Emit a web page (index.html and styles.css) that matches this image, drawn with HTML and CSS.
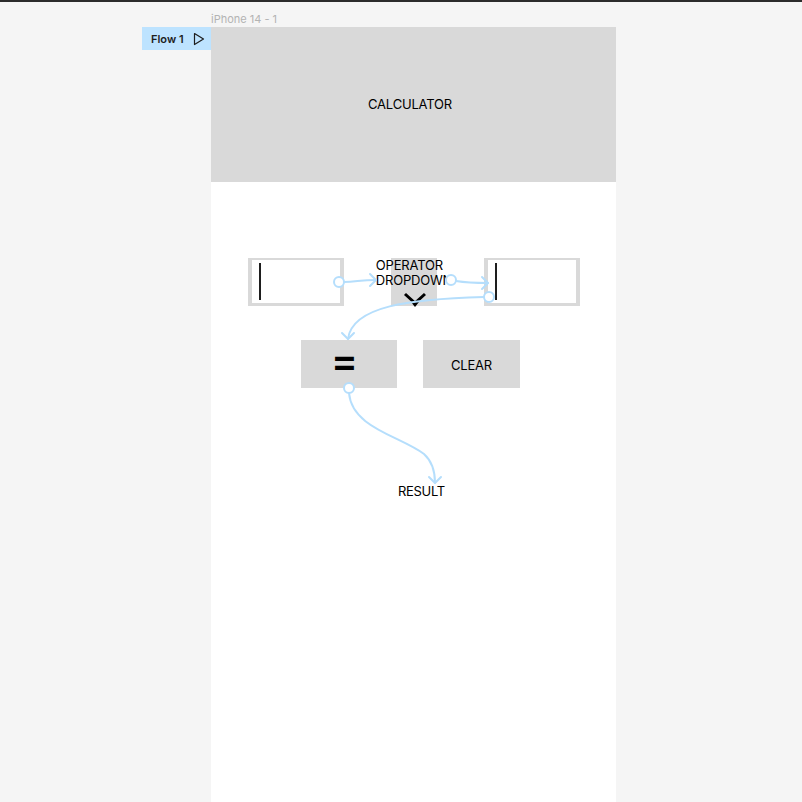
FILE: index.html
```html
<!DOCTYPE html>
<html lang="en">
<head>
  <meta charset="UTF-8" />
  <title>iPhone 14 - 1</title>
  <meta name="viewport" content="width=device-width, initial-scale=1.0"/>
  <link rel="stylesheet" href="styles.css">
</head>
<body>
  <div class="topbar"></div>

  <div class="canvas">
    <div class="frame-label">iPhone 14 - 1</div>

    <div class="flow-badge">
      <span>Flow 1</span>
      <svg class="play" width="12" height="14" viewBox="0 0 12 14">
        <path d="M1.5 1.5 L10.5 7 L1.5 12.5 Z" fill="none" stroke="#1e1e1e" stroke-width="1.2" stroke-linejoin="round"/>
      </svg>
    </div>

    <div class="frame">
      <div class="header">CALCULATOR</div>

      <div class="inputs-row">
        <div class="num-input"><span class="caret"></span></div>
        <div class="operator">
          <span class="operator-text">OPERATOR<br>DROPDOWN</span>
        </div>
        <div class="num-input"><span class="caret"></span></div>
      </div>

      <div class="buttons-row">
        <div class="btn btn-equals">=</div>
        <div class="btn btn-clear">CLEAR</div>
      </div>

      <div class="result">RESULT</div>
    </div>
  </div>

  <!-- prototype connections drawn over the frame -->
  <svg class="links" width="802" height="802" viewBox="0 0 802 802">
    <path d="M405 294 L415 303 L425 294" fill="none" stroke="#000" stroke-width="3"/>
    <path d="M411 302 L415 307 L419 302 Z" fill="#000"/>
    <g fill="none" stroke="#b5defc" stroke-width="2" stroke-linecap="round" stroke-linejoin="round">
      <path d="M344 282 C 356 282, 360 280, 376 280"/>
      <path d="M370 274 L376 280 L370 286"/>

      <path d="M456 281 C 468 283, 476 283, 488 283"/>
      <path d="M482 277 L488 283 L482 289"/>

      <path d="M484 297 C 410 299, 352 306, 348 339"/>
      <path d="M342 333 L348 339 L354 333"/>

      <path d="M349 393 C 352 428, 400 436, 424 454 C 434 463, 435 474, 435 483"/>
      <path d="M429 477 L435 483 L441 477"/>
    </g>
    <g fill="#fff" stroke="#b5defc" stroke-width="2">
      <circle cx="339" cy="282" r="5"/>
      <circle cx="451" cy="280" r="5"/>
      <circle cx="489" cy="297" r="5"/>
      <circle cx="349" cy="388" r="5"/>
    </g>
  </svg>
</body>
</html>
```

FILE: styles.css
```css
body {
  margin: 0;
  height: 802px;
  overflow: hidden;
  position: relative;
  background: #f5f5f5;
  font-family: Inter, 'Noto Sans', sans-serif;
  color: #1e1e1e;
}

.topbar {
  height: 2px;
  background: #2c2c2c;
}

.canvas {
  position: relative;
  padding-top: 10px;
  padding-left: 211px;
}

.frame-label {
  font-size: 11px;
  line-height: 15px;
  color: #b3b3b3;
}

.flow-badge {
  position: absolute;
  left: 142px;
  top: 25px;
  width: 69px;
  height: 23px;
  box-sizing: border-box;
  padding: 0 6px 0 9px;
  background: #bde3ff;
  display: flex;
  align-items: center;
  justify-content: space-between;
  font-size: 11px;
  font-weight: 600;
}

.frame {
  width: 405px;
  height: 775px;
  background: #fff;
}

.header {
  height: 155px;
  box-sizing: border-box;
  padding: 0 7px 2px 0;
  background: #d9d9d9;
  display: flex;
  align-items: center;
  justify-content: center;
  font-size: 13px;
  letter-spacing: -0.2px;
  color: #000;
}

.inputs-row {
  display: flex;
  justify-content: center;
  gap: 47px;
  margin-top: 76px;
  padding-left: 1px;
}

.num-input {
  width: 81px;
  height: 43px;
  padding-left: 7px;
  border-style: solid;
  border-color: #d9d9d9;
  border-width: 2px 4px 3px 4px;
  background: #fff;
  display: flex;
}

.caret {
  width: 1.5px;
  height: 37px;
  margin-top: 3px;
  background: #1e1e1e;
}

.operator {
  width: 46px;
  height: 48px;
  background: #d9d9d9;
  display: flex;
  flex-direction: column;
  align-items: center;
}

.operator-text {
  white-space: nowrap;
  font-size: 13px;
  line-height: 15px;
  letter-spacing: -0.2px;
  color: #000;
}

.buttons-row {
  display: flex;
  gap: 26px;
  margin-top: 34px;
  padding-left: 90px;
}

.btn {
  height: 48px;
  box-sizing: border-box;
  background: #d9d9d9;
  display: flex;
  align-items: center;
  justify-content: center;
  color: #000;
}

.btn-equals {
  width: 96px;
  font-size: 40px;
  font-weight: 600;
  padding: 0 9px 8px 0;
}

.btn-clear {
  width: 97px;
  font-size: 13px;
  letter-spacing: -0.2px;
  padding-top: 1px;
}

.result {
  margin-top: 95px;
  padding-left: 187px;
  font-size: 13px;
  line-height: 16px;
  letter-spacing: -0.3px;
  color: #000;
}

.links {
  position: absolute;
  left: 0;
  top: 0;
  pointer-events: none;
}
```
